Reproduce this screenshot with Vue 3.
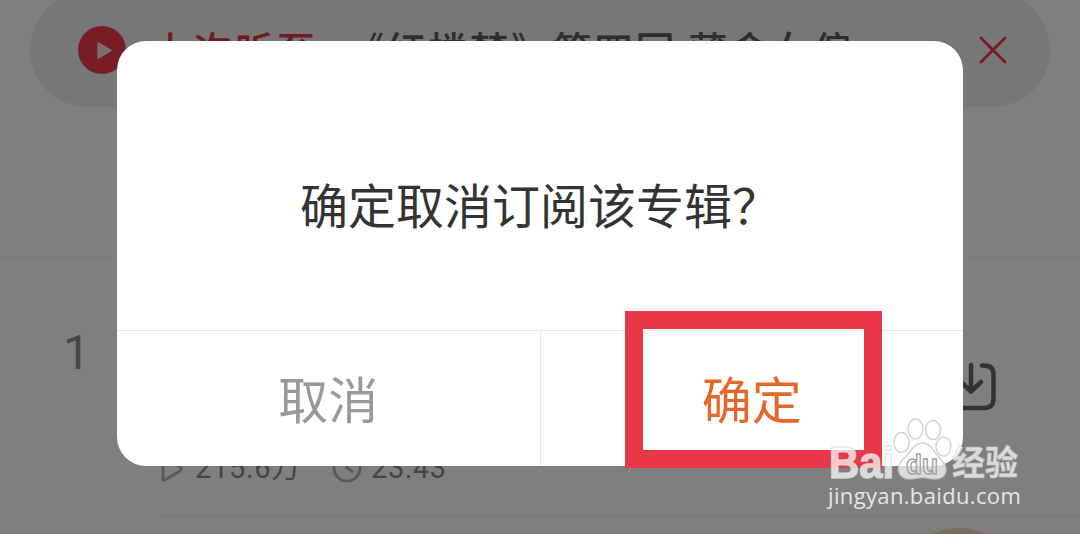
<template>
  <div class="screen">
    <div class="page">
      <header class="resume-bar">
        <svg class="play" viewBox="0 0 48 48">
          <circle cx="24" cy="24" r="24" />
          <path d="M20.500 17.500v14l12-7z" />
        </svg>
        <span class="resume-label">上次听至</span>
        <span class="resume-title">《红楼梦》第四回 薄命女偏</span>
        <svg class="close" viewBox="0 0 28 28">
          <path d="M2 2L26 26M26 2L2 26" />
        </svg>
      </header>

      <section class="track">
        <div class="track-index">1</div>
        <div class="track-body">
          <div class="stats">
            <svg class="icon-play" viewBox="0 0 24 30">
              <path d="M3 4.500v21q0 2.500 2.200 1.300L20 18q2.500-2 0-4L5.200 3.200Q3 2 3 4.500z" />
            </svg>
            <span class="plays">215.6万</span>
            <svg class="icon-clock" viewBox="0 0 30 30">
              <circle cx="15" cy="15" r="13" />
              <path d="M15 7v8l6 4" />
            </svg>
            <span>23:43</span>
          </div>
          <svg class="download" viewBox="0 0 54 52">
            <path d="M15 4.500h-2Q4 4.500 4 13.500v24Q4 47 13 47h28q9.500 0 9.500-9.500v-24Q50.500 4.500 41 4.500h-2" />
            <path d="M28 4v26M18 21l10 9.500L38 21" />
          </svg>
        </div>
      </section>

      <div class="next-track">
        <div class="avatar"></div>
      </div>
    </div>

    <div class="mask">
      <div class="dialog">
        <p class="message">确定取消订阅该专辑？</p>
        <div class="actions">
          <button class="btn cancel">取消</button>
          <button class="btn confirm">确定</button>
        </div>
      </div>
    </div>

    <div class="highlight"></div>

    <div class="watermark">
      <svg class="logo" viewBox="0 0 200 64">
        <g class="paw">
          <ellipse cx="73.500" cy="26.500" rx="7.500" ry="10" />
          <ellipse cx="87.500" cy="13" rx="7.500" ry="10" />
          <ellipse cx="105" cy="14" rx="7.500" ry="9.500" />
          <ellipse cx="115.500" cy="30.500" rx="7.500" ry="9.500" />
          <path d="M94.500 27c-8 0-11 7-15 12-5 5-9 8-9 14 0 7 6 10 11 10 5 0 8-1.500 13-1.500S102 63 107 63c6 0 11-3 11-10 0-6-5-9-9-14-4-5-7-12-14.500-12z" />
        </g>
        <text x="1" y="62" class="bai" textLength="65" lengthAdjust="spacingAndGlyphs">Bai</text>
        <text x="78" y="58" class="du" textLength="32" lengthAdjust="spacingAndGlyphs">du</text>
        <text x="124" y="59" class="exp" textLength="66" lengthAdjust="spacingAndGlyphs">经验</text>
      </svg>
      <div class="url">jingyan.baidu.com</div>
    </div>
  </div>
</template>

<script setup>
</script>

<style>
body {
  margin: 0;
}
</style>

<style scoped>
.screen {
  position: relative;
  width: 1080px;
  height: 534px;
  overflow: hidden;
  background: #fff;
  font-family: Roboto, "Noto Sans CJK SC", sans-serif;
}

.page {
  display: flex;
  flex-direction: column;
  height: 534px;
}

.resume-bar {
  display: flex;
  flex: none;
  align-items: center;
  box-sizing: border-box;
  width: 1020px;
  height: 115px;
  margin: -8px 30px 0;
  padding: 0 43px 0 48px;
  border-radius: 58px;
  background: #eee;
  font-family: "Noto Sans CJK SC", sans-serif;
  font-size: 39px;
  font-weight: 500;
  letter-spacing: 2.500px;
  white-space: nowrap;
}

.play {
  width: 48px;
  height: 48px;
  margin-right: 26px;
}

.play circle {
  fill: #f03a46;
}

.play path {
  fill: #f4dcdc;
  stroke: #f4dcdc;
  stroke-width: 2.500;
  stroke-linejoin: round;
}

.resume-label,
.resume-title {
  padding-bottom: 4px;
}

.resume-label {
  margin-right: 27px;
  color: #e63541;
}

.resume-title {
  color: #5c5c5c;
}

.close {
  width: 28px;
  height: 28px;
  margin-left: auto;
  fill: none;
  stroke: #ec3541;
  stroke-width: 2.800;
  stroke-linecap: round;
}

.track {
  display: flex;
  flex: none;
  box-sizing: border-box;
  height: 259px;
  margin-top: 150px;
  border-top: 1px solid #f0f0f0;
}

.track-index {
  width: 97px;
  padding: 67px 0 0 63px;
  color: #8c8c8c;
  font-size: 48px;
  line-height: 56px;
}

.track-body {
  display: flex;
  flex: 1;
  align-items: flex-end;
  justify-content: space-between;
  padding: 0 83px 29px 0;
  border-bottom: 1px solid #eee;
}

.stats {
  display: flex;
  align-items: center;
  color: #8a8a8a;
  font-size: 29px;
  letter-spacing: 0.700px;
  line-height: 36px;
}

.icon-play,
.icon-clock {
  fill: none;
  stroke: #b4b4b4;
  stroke-width: 3;
  stroke-linejoin: round;
}

.icon-play {
  width: 24px;
  height: 30px;
  margin-right: 11px;
}

.plays {
  width: 137px;
}

.icon-clock {
  width: 30px;
  height: 30px;
  margin-right: 9px;
}

.download {
  width: 54px;
  height: 52px;
  margin-bottom: 73px;
  fill: none;
  stroke: #666;
  stroke-width: 4.500;
  stroke-linecap: round;
  stroke-linejoin: round;
}

.next-track {
  padding: 12px 0 0 895px;
}

.avatar {
  width: 126px;
  height: 126px;
  border-radius: 50%;
  background: #eedcba;
}

.mask {
  position: absolute;
  inset: 0;
  background: rgba(0, 0, 0, 0.5);
}

.dialog {
  display: flex;
  flex-direction: column;
  width: 846px;
  height: 425px;
  margin: 41px 0 0 117px;
  border-radius: 29px;
  background: #fff;
  overflow: hidden;
  font-family: "Noto Sans CJK SC", sans-serif;
}

.message {
  height: 289px;
  margin: 0;
  padding-top: 128px;
  box-sizing: border-box;
  color: #333;
  font-size: 48px;
  line-height: 68px;
  text-align: center;
}

.actions {
  display: flex;
  flex: 1;
  border-top: 1px solid #e8e8e8;
}

.btn {
  flex: 1;
  padding: 0 0 4px;
  border: 0;
  background: none;
  font-family: inherit;
  font-size: 50px;
  line-height: 60px;
}

.cancel {
  border-right: 1px solid #e8e8e8;
  color: #999;
}

.confirm {
  color: #e2692a;
}

.highlight {
  position: absolute;
  left: 625px;
  top: 311px;
  width: 221px;
  height: 121px;
  border: 18px solid #e83746;
}

.watermark {
  position: absolute;
  left: 828px;
  top: 416px;
  width: 200px;
}

.logo {
  display: block;
  width: 200px;
  height: 64px;
  overflow: visible;
  fill: rgba(255, 255, 255, 0.72);
  stroke: rgba(200, 200, 200, 0.6);
}

.paw {
  stroke: rgba(200, 200, 200, 0.8);
  stroke-width: 1.500;
}

.bai,
.du {
  font-family: "Liberation Sans", sans-serif;
  font-weight: 700;
}

.bai {
  stroke: rgba(225, 225, 225, 0.8);
  stroke-width: 1.500;
  font-size: 44px;
}

.du {
  fill: rgba(255, 255, 255, 0.2);
  stroke: #a4a4a4;
  stroke-width: 1.500;
  font-size: 28px;
}

.exp {
  font-family: "Noto Sans CJK SC", sans-serif;
  font-size: 34px;
  font-weight: 700;
}

.url {
  margin-top: 2px;
  color: #e6e6e6;
  font-family: "Open Sans", sans-serif;
  font-size: 22px;
  letter-spacing: 0.350px;
  line-height: 26px;
}
</style>
